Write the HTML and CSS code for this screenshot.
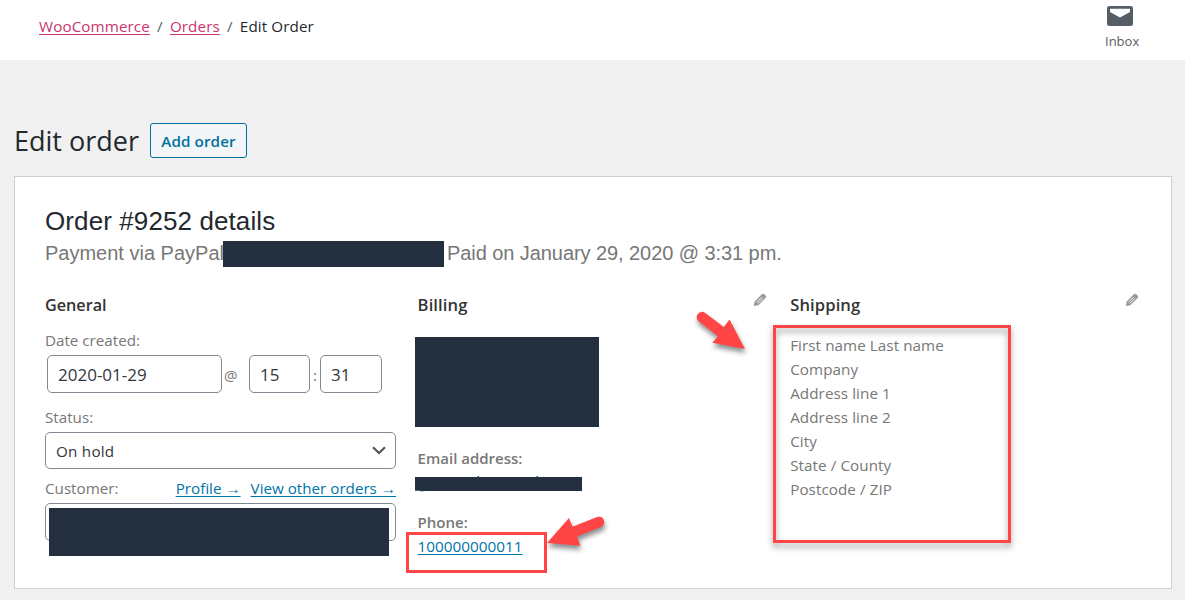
FILE: index.html
```html
<!DOCTYPE html>
<html lang="en">
<head>
<meta charset="utf-8">
<title>Edit order</title>
<link rel="stylesheet" href="styles.css">
</head>
<body>
<header class="topbar">
  <nav class="crumbs"><a href="#">WooCommerce</a><span class="sep">/</span><a href="#">Orders</a><span class="sep">/</span><span class="here">Edit Order</span></nav>
  <div class="inbox">
    <svg width="26" height="20" viewBox="0 0 26 20"><rect width="26" height="20" rx="2.5" fill="#555d66"/><path d="M3 2.7h20v3.2l-10 5.7L3 5.9z" fill="#fff"/></svg>
    <span>Inbox</span>
  </div>
</header>
<main class="page">
  <div class="heading"><h1>Edit order</h1><a class="add" href="#">Add order</a></div>
  <section class="card">
    <h2>Order #9252 details</h2>
    <p class="payment"><span class="via">Payment via PayPal</span><span class="mask mask-txn"></span><span class="paid">Paid on January 29, 2020 @ 3:31 pm.</span></p>
    <div class="columns">
      <div class="col">
        <h3 class="general">General</h3>
        <label class="lbl date-lbl">Date created:</label>
        <div class="date-row"><span class="field date">2020-01-29</span><span class="at">@</span><span class="field hour">15</span><span class="colon">:</span><span class="field minute">31</span></div>
        <label class="lbl status-lbl">Status:</label>
        <div class="field select"><span>On hold</span>
          <svg width="14" height="9" viewBox="0 0 14 9"><path d="M1 1.2l6 5.8 6-5.8" fill="none" stroke="#555" stroke-width="2.2"/></svg>
        </div>
        <div class="lbl cust-lbl"><span>Customer:</span><span class="links"><a href="#" class="profile">Profile →</a><a href="#" class="others">View other orders →</a></span></div>
        <div class="field customer"><span class="mask mask-cust"></span></div>
      </div>
      <div class="col">
        <div class="col-head"><h3>Billing</h3>
          <svg class="pencil" width="14" height="14" viewBox="0 0 14 14"><use href="#pen"/></svg>
        </div>
        <div class="mask mask-address"></div>
        <div class="strong email-lbl">Email address:</div>
        <svg class="email" width="167" height="16" viewBox="0 0 167 16"><path d="M62.500 0h1.500v2h-1.500zM121.500 0h1.500v2h-1.500zM5 14h4.500v1.300H5z" fill="#0073aa"/><path d="M0 1h167v14H9.500v-.2H0z" fill="#232f3e"/></svg>
        <div class="strong phone-lbl">Phone:</div>
        <a class="phone" href="#">100000000011</a>
      </div>
      <div class="col">
        <div class="col-head"><h3>Shipping</h3>
          <svg class="pencil" width="14" height="14" viewBox="0 0 14 14"><g id="pen"><path d="M.8 13l.9-4.600L8.800 1.200q1.300-1 2.600.1l1.200 1.200q1 1.200 0 2.500L5.400 12.200z" fill="#999"/><path d="M3.600 9.200l5-5M4.900 10.500l5-5" stroke="#fff" stroke-width=".9" fill="none"/></g></svg>
        </div>
        <address>First name Last name<br>Company<br>Address line 1<br>Address line 2<br>City<br>State / County<br>Postcode / ZIP</address>
      </div>
    </div>
  </section>
</main>
<div class="mark mark-shipping"></div>
<div class="mark mark-phone"></div>
<svg class="arrows" width="1185" height="600" viewBox="0 0 1185 600" fill="#ff4545">
  <path d="M705 312.800L723.800 327 729.500 319.500 745 349 712.300 342.800 718 336.200 699 321.600A5.300 5.300 0 0 1 705 312.800z"/>
  <path d="M597 517L572.500 526.700 569 518 547 543 580.300 545.800 577 536.500 600.800 527A5.200 5.200 0 0 0 597 517z"/>
</svg>
</body>
</html>
```
FILE: styles.css
```css
* { box-sizing: border-box; }
body { margin: 0; height: 600px; overflow: hidden; position: relative; background: #f0f0f0; font-family: "Open Sans", "Noto Sans", sans-serif; font-size: 15px; color: #777; }
h1, h2, h3, p { margin: 0; font-weight: 400; }
a { color: #0073aa; text-decoration: underline; text-underline-offset: 2px; text-decoration-thickness: 1px; }
.topbar { height: 60px; background: #fff; display: flex; justify-content: space-between; padding: 0 44px 0 39px; }
.crumbs { display: flex; line-height: 53px; font-size: 15.2px; letter-spacing: .11px; }
.crumbs a { color: #c9356e; }
.sep { width: 20px; text-align: center; color: #555d66; }
.here { color: #23282d; }
.inbox { width: 36px; padding-top: 6px; display: flex; flex-direction: column; color: #555d66; font-size: 13px; line-height: 18px; }
.inbox svg { display: block; margin: 0 0 6px 2px; }
.page { padding: 63px 13px 0 14px; }
.heading { display: flex; height: 35px; margin-bottom: 18px; }
h1 { width: 136px; font-size: 27px; line-height: 36px; color: #23282d; white-space: nowrap; }
.add { width: 97px; height: 35px; border: 1px solid #0071a1; border-radius: 3px; background: #f3f5f6; color: #0071a1; font-size: 15.2px; letter-spacing: .1px; font-weight: 600; line-height: 35px; text-align: center; text-decoration: none; white-space: nowrap; }
.card { height: 413px; background: #fff; border: 1px solid #ccd0d4; padding: 28px 30px 0; }
h2 { font: 26px/32px "Liberation Sans", Arial, sans-serif; letter-spacing: .1px; color: #23282d; }
.payment { display: flex; height: 32px; font: 20px/32px "Liberation Sans", Arial, sans-serif; white-space: nowrap; }
.via { width: 178px; overflow: hidden; }
.paid { letter-spacing: -.07px; }
.mask { display: block; background: #232f3e; }
.mask-txn { width: 221px; height: 26px; margin: 4px 3px 0 0; }
.columns { display: grid; grid-template-columns: repeat(3, 351px); column-gap: 21.6px; margin-top: 22px; }
h3 { font-size: 16.6px; font-weight: 600; line-height: 28px; color: #333; letter-spacing: .1px; }
.general { font-size: 16.2px; letter-spacing: 0; }
.col-head { display: flex; justify-content: space-between; }
.pencil { margin: 2px 2px 0 0; }
.lbl { display: block; white-space: nowrap; line-height: 22px; font-size: 15.2px; }
.date-lbl { margin-top: 10px; }
.date-row { display: flex; margin: 4px 0 0 2px; line-height: 38px; }
.field { display: block; height: 38px; border: 1px solid #7e8993; border-radius: 5px; padding: 0 10px; color: #32373c; line-height: 36px; }
.date { width: 175px; font-size: 17px; line-height: 37px; }
.at { width: 27px; padding-left: 2px; line-height: 40px; }
.hour { width: 61px; font-size: 17px; line-height: 37px; }
.colon { width: 10px; text-align: center; line-height: 40px; }
.minute { width: 62px; font-size: 17px; line-height: 37px; }
.status-lbl { margin-top: 11px; }
.select { height: 37px; margin-top: 4px; display: flex; justify-content: space-between; align-items: center; padding: 0 9px 0 10px; font-size: 15.2px; letter-spacing: .25px; }
.cust-lbl { display: flex; justify-content: space-between; margin-top: 8px; }
.links { display: flex; gap: 10px; }
.customer { margin-top: 4px; padding: 4px 3px 0; }
.mask-cust { width: 340px; height: 48px; }
.mask-address { width: 184px; height: 90px; margin: 18px 0 0 -3px; }
.strong { font-weight: 600; line-height: 22px; white-space: nowrap; }
.email-lbl { margin-top: 20px; }
.email { display: block; margin: 7px 0 0 -3px; }
.phone-lbl { margin-top: 19px; }
.phone { display: block; line-height: 26px; font-size: 15.3px; }
address { margin-top: 14px; font-style: normal; font-size: 15.2px; letter-spacing: .08px; line-height: 24px; }
.mark { position: absolute; border: 3px solid #ff4545; }
.mark-shipping { left: 773px; top: 325px; width: 238px; height: 218px; filter: drop-shadow(0 4px 3px rgba(0,0,0,.4)); }
.mark-phone { left: 406px; top: 532px; width: 141px; height: 41px; }
.arrows { position: absolute; left: 0; top: 0; filter: drop-shadow(1px 4px 2.5px rgba(0,0,0,.45)); }
```
